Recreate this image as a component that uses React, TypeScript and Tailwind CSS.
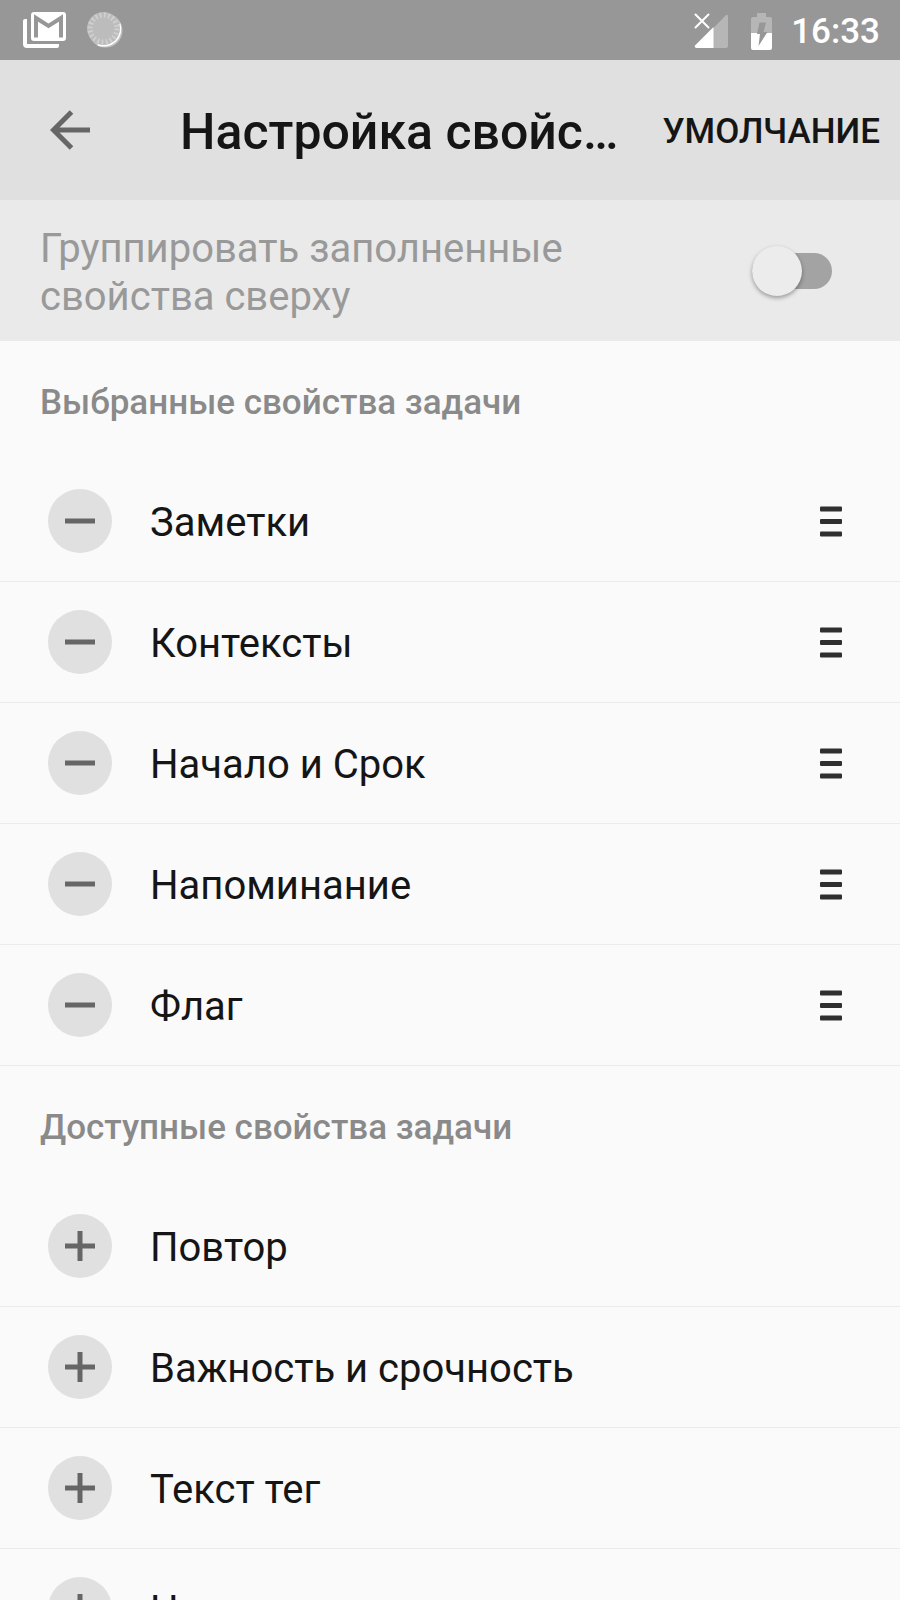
import { useState } from 'react';

interface PropertyRowProps {
  title: string;
  selected?: boolean;
}

const selectedProperties = ['Заметки', 'Контексты', 'Начало и Срок', 'Напоминание', 'Флаг'];
const availableProperties = ['Повтор', 'Важность и срочность', 'Текст тег', 'Н'];

function GmailIcon() {
  return (
    <svg width="44" height="37" viewBox="0 0 44 37" fill="none" aria-hidden="true">
      <path d="M0 9q0-2 2-2h2v25h32v2q0 2-2 2H4a4 4 0 0 1-4-4z" fill="#fff" />
      <rect x="8" y="0" width="35" height="29" rx="3" fill="#fff" />
      <path d="M13 25.500V6L25.500 14 38 6V25.500" stroke="#979797" strokeWidth="4" />
    </svg>
  );
}

function SpinnerIcon() {
  return (
    <svg width="38" height="38" viewBox="0 0 38 38" fill="none" aria-hidden="true">
      <circle cx="19.500" cy="19.500" r="17" fill="#c4c4c4" />
      <path d="M33 13A16 16 0 0 1 12 33" stroke="#fff" strokeWidth="3" />
      <circle cx="17.500" cy="17.500" r="16.500" fill="#bcbcbc" />
      <circle cx="17.500" cy="17.500" r="13.500" stroke="#d0d0d0" strokeWidth="5" strokeDasharray="1.800 2.440" />
    </svg>
  );
}

function SignalIcon() {
  return (
    <svg width="35" height="36" viewBox="0 0 35 36" fill="none" aria-hidden="true">
      <path d="M19 15.500 31.500 2.500Q34 0.500 34 4V33q0 2-2 2H19z" fill="#b6b6b6" />
      <path d="M19.500 14v21H2q-2-1-1-2.500z" fill="#fff" />
      <path d="M1.500 1.500l13 13M14.500 1.500l-13 13" stroke="#fff" strokeWidth="2" strokeLinecap="round" />
    </svg>
  );
}

function BatteryIcon() {
  return (
    <svg width="22" height="37" viewBox="0 0 22 37" aria-hidden="true">
      <path d="M0 20V6q0-2 2-2h4V0h9v4h4q2 0 2 2v14z" fill="#b6b6b6" />
      <path d="M0 20h21v15q0 2-2 2H2q-2 0-2-2z" fill="#fff" />
      <path d="M8.500 9.500H15l-2.500 9.500H16.500L7.500 33l1.500-12H6z" fill="#979797" />
    </svg>
  );
}

function StatusBar() {
  return (
    <div className="flex h-[60px] shrink-0 items-center justify-between bg-[#979797] pr-5 pl-[23px]">
      <div className="flex items-center gap-[19px]">
        <GmailIcon />
        <SpinnerIcon />
      </div>
      <div className="flex items-center pt-0.5 text-white">
        <SignalIcon />
        <div className="mr-[18px] ml-[22px]">
          <BatteryIcon />
        </div>
        <time className="pt-0.5 text-[35px] leading-10 font-medium">16:33</time>
      </div>
    </div>
  );
}

function PropertyRow(props: PropertyRowProps) {
  return (
    <li className="flex h-[121px] items-center border-b border-[#ebebeb] pr-[58px] pl-12">
      <button
        type="button"
        aria-label={props.selected ? 'Убрать' : 'Добавить'}
        className="flex size-16 shrink-0 items-center justify-center rounded-full bg-[#e0e0e0]"
      >
        <svg width="30" height="30" viewBox="0 0 30 30" stroke="#666" strokeWidth="5" aria-hidden="true">
          <path d={props.selected ? 'M0 15h30' : 'M0 15h30M15 0v30'} />
        </svg>
      </button>
      <span className="ml-[38px] grow pt-1 text-[40px] leading-12">{props.title}</span>
      {props.selected && (
        <button type="button" aria-label="Переместить">
          <svg width="22" height="31" viewBox="0 0 22 31" fill="#2f2f2f" aria-hidden="true">
            <rect y="0.500" width="22" height="5" rx="1" />
            <rect y="13" width="22" height="5" rx="1" />
            <rect y="25.500" width="22" height="5" rx="1" />
          </svg>
        </button>
      )}
    </li>
  );
}

function SectionTitle({ title }: { title: string }) {
  return (
    <h2 className="flex h-[120px] items-center px-10 pt-1 text-[35px] leading-10 font-medium text-[#8a8a8a]">
      {title}
    </h2>
  );
}

export default function App() {
  const [grouped, setGrouped] = useState(false);

  return (
    <div className="flex h-screen flex-col overflow-hidden bg-[#fafafa] font-['Roboto',sans-serif] text-[#151515]">
      <StatusBar />
      <header className="flex h-[140px] shrink-0 items-center bg-[#e0e0e0] pr-5 pl-[50px]">
        <button type="button" aria-label="Назад">
          <svg width="40" height="40" viewBox="0 0 40 40" fill="none" stroke="#666" strokeWidth="5" aria-hidden="true">
            <path d="M40 20H4M21.500 2 3.500 20l18 18" />
          </svg>
        </button>
        <h1 className="ml-[90px] grow pt-1 text-[50px] leading-15 font-medium">Настройка свойс…</h1>
        <button type="button" className="pt-1 text-[35px] leading-10 font-medium">
          УМОЛЧАНИЕ
        </button>
      </header>
      <div className="flex h-[141px] shrink-0 items-center justify-between bg-[#eaeaea] pr-[68px] pl-10">
        <label htmlFor="group" className="max-w-[600px] pt-1 text-[40px] leading-12 text-[#999]">
          Группировать заполненные свойства сверху
        </label>
        <input
          id="group"
          type="checkbox"
          role="switch"
          checked={grouped}
          onChange={() => setGrouped(!grouped)}
          className="relative h-9 w-20 appearance-none rounded-full bg-[#a3a3a3] before:absolute before:-top-[7px] before:left-0 before:size-[50px] before:rounded-full before:bg-[#ececec] before:shadow-[0_2px_4px_rgba(0,0,0,0.35)] checked:before:left-[30px]"
        />
      </div>
      <main>
        <SectionTitle title="Выбранные свойства задачи" />
        <ul>
          {selectedProperties.map((title) => (
            <PropertyRow key={title} title={title} selected />
          ))}
        </ul>
        <SectionTitle title="Доступные свойства задачи" />
        <ul>
          {availableProperties.map((title) => (
            <PropertyRow key={title} title={title} />
          ))}
        </ul>
      </main>
    </div>
  );
}
